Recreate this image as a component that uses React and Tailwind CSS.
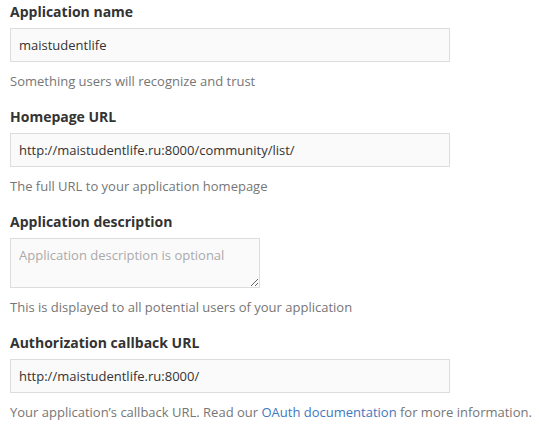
export default function App() {
  return (
    <form className="bg-white pl-[10px] pt-0 font-['Open_Sans',sans-serif] text-[#333]">
      <Group label="Application name" hint="Something users will recognize and trust">
        <input
          type="text"
          defaultValue="maistudentlife"
          className="block h-[34px] w-[440px] border border-[#ddd] bg-[#fafafa] px-[8px] text-[13px] text-[#333] outline-none"
        />
      </Group>

      <Group label="Homepage URL" hint="The full URL to your application homepage">
        <input
          type="text"
          defaultValue="http://maistudentlife.ru:8000/community/list/"
          className="block h-[34px] w-[440px] border border-[#ddd] bg-[#fafafa] px-[8px] text-[13px] text-[#333] outline-none"
        />
      </Group>

      <Group label="Application description" hint="This is displayed to all potential users of your application">
        <textarea
          placeholder="Application description is optional"
          className="block h-[50px] w-[250px] border border-[#ddd] bg-[#fafafa] px-[8px] py-[7px] text-[13px] leading-[18px] text-[#333] outline-none placeholder:text-[#aaa]"
        />
      </Group>

      <Group
        label="Authorization callback URL"
        hint={
          <>
            Your application’s callback URL. Read our{' '}
            <a href="#" className="text-[#4078c0]">OAuth documentation</a> for more information.
          </>
        }
      >
        <input
          type="text"
          defaultValue="http://maistudentlife.ru:8000/"
          className="block h-[34px] w-[440px] border border-[#ddd] bg-[#fafafa] px-[8px] text-[13px] text-[#333] outline-none"
        />
      </Group>
    </form>
  );
}

function Group({ label, hint, children }) {
  return (
    <div className="pb-[14px]">
      <label className="block h-[28px] pt-[2px] text-[14px] font-bold leading-[20px]">{label}</label>
      {children}
      <p className="mt-[9px] text-[13px] leading-[20px] text-[#767676]">{hint}</p>
    </div>
  );
}
